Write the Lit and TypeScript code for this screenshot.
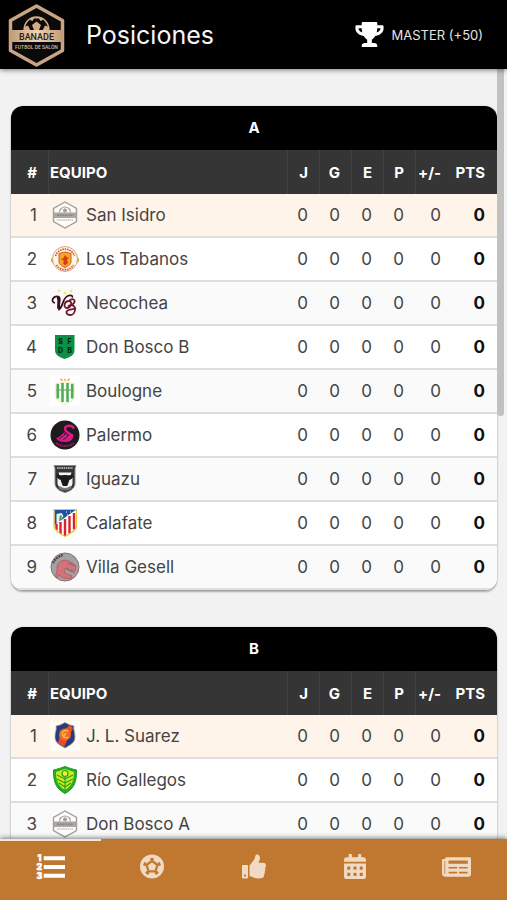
import { LitElement, html, css, svg } from "lit";
import { customElement, property } from "lit/decorators.js";

interface Team {
  name: string;
  crest: string;
}

interface Group {
  name: string;
  teams: Team[];
}

const GROUPS: Group[] = [
  {
    name: "A",
    teams: [
      { name: "San Isidro", crest: "hexagon" },
      { name: "Los Tabanos", crest: "devils" },
      { name: "Necochea", crest: "monogram" },
      { name: "Don Bosco B", crest: "green-shield" },
      { name: "Boulogne", crest: "green-stripes" },
      { name: "Palermo", crest: "swan" },
      { name: "Iguazu", crest: "bull" },
      { name: "Calafate", crest: "red-stripes" },
      { name: "Villa Gesell", crest: "warrior" },
    ],
  },
  {
    name: "B",
    teams: [
      { name: "J. L. Suarez", crest: "blue-shield" },
      { name: "Río Gallegos", crest: "leaf-shield" },
      { name: "Don Bosco A", crest: "hexagon" },
    ],
  },
];

const CRESTS: Record<string, unknown> = {
  hexagon: svg`
    <path d="M15 2 26.500 8.500v13L15 28 3.500 21.500v-13z" fill="#fff" fill-opacity=".6" stroke="#a3a09b" stroke-width="1.400"/>
    <path d="M9.500 12.500a5.500 5.500 0 0 1 11 0" fill="none" stroke="#a3a09b" stroke-width="1.200"/>
    <path d="M15 8.500l2 1.500-1 2h-2l-1-2zM9.500 10l2-2M20.500 10l-2-2" fill="#a3a09b" stroke="#a3a09b" stroke-width=".8"/>
    <rect x="4" y="12.500" width="22" height="5.500" fill="#aaa7a2"/>
    <path d="M7 15.200h16" stroke="#888580" stroke-width="1.600" stroke-dasharray="2 .7"/>
    <path d="M7 20h16" stroke="#aaa7a2" stroke-width="1.200" stroke-dasharray="1.500 .6"/>`,
  devils: svg`
    <circle cx="4.500" cy="16" r="3" fill="#e5a526" stroke="#b98632" stroke-width=".8"/>
    <circle cx="25.500" cy="16" r="3" fill="#e5a526" stroke="#b98632" stroke-width=".8"/>
    <circle cx="15" cy="15" r="12.500" fill="#fff6ea" stroke="#d9a878" stroke-width="1"/>
    <path d="M5.500 12a10 10 0 0 1 19 0" fill="none" stroke="#dc5a3c" stroke-width="1.800" stroke-dasharray="1.600 .8"/>
    <path d="M6.500 21a10 10 0 0 0 17 0" fill="none" stroke="#dc5a3c" stroke-width="1.800" stroke-dasharray="1.600 .8"/>
    <path d="M9 9.500 15 8l6 1.500v8c0 3-2.500 4.500-6 6-3.500-1.500-6-3-6-6z" fill="#f5a822" stroke="#d2562a" stroke-width="1"/>
    <path d="M15 11l2 2.500 2-.5-2 3 1 3-3 2.500-2-2.500 1-2-3-2 2-.5z" fill="#d63a1f"/>`,
  monogram: svg`
    <path d="M8 2l2 2M10 2 8 4M14 4l2 2m0-2-2 2M20 2l2 2m0-2-2 2" stroke="#efe66c" stroke-width="1.600"/>
    <path d="M5 15c-5-1-2-7 3-6.500 4 .5 0 10 1 13C14 18 12 9 19 7.500c3-.5 4 1 3 2" fill="none" stroke="#3c0d1b" stroke-width="1.700"/>
    <path d="M7 9.500c3 .5 1 7 1.500 11" fill="none" stroke="#3c0d1b" stroke-width="2.600"/>
    <path d="M19 13c-5 0-6 7-2 7 4 0 6-7 2-7M19 13c4-4 8 0 4 3-2 1.500-4 1.500-5 2M21 17c6 0 5 10-1 10-4 0-5-4-1-5 3-.8 5-1 7-2" fill="none" stroke="#6b1a2d" stroke-width="1.800"/>`,
  "green-shield": svg`
    <path d="M5 3h19.500v15c0 5-4 7-10 9C9 25 5 23 5 18z" fill="#0a9145"/>
    <g fill="#062414" font-family="Inter, sans-serif" font-size="7" font-weight="800" text-anchor="middle">
      <text x="10.500" y="12">S</text><text x="19.500" y="12">F</text>
      <text x="10.500" y="20.500">D</text><text x="19.500" y="20.500">B</text>
    </g>`,
  "green-stripes": svg`
    <rect width="30" height="30" fill="#fff"/>
    <path d="M11 2.500l1 2.500M19 2.500l-1 2.500M15 3v1.500" stroke="#eab84e" stroke-width="2"/>
    <path d="M6 7.500c3 0 6-1 9-2 3 1 6 2 9 2V21c0 3-5 5-9 8-4-3-9-5-9-8z" fill="#fbfdf7" stroke="#dfd9a5" stroke-width=".7"/>
    <path d="M7.800 8v14.500M12.500 7v19M17.500 7v19M22.200 8v14.500" stroke="#50ad58" stroke-width="2.600"/>
    <path d="M6 14h18" stroke="#6aad62" stroke-width="1.200"/>`,
  swan: svg`
    <circle cx="15" cy="15" r="14.500" fill="#1f1a1e"/>
    <path d="M24 8.500c-2-4-9-3.500-9 .5 0 3.500 7 4 7 8" fill="none" stroke="#d81b86" stroke-width="2.400"/>
    <path d="M23 14c1 5-2 8-8 8-4 0-7-1-9-4 2 0 3-1 4.500-2.500L16 11l-3 5 6-4-3 5 5-3z" fill="#d81b86"/>
    <path d="M9 19l4-3m0 4 4-3" stroke="#1f1a1e" stroke-width=".8"/>
    <path d="M6 23c5 4 13 4 18 0" fill="none" stroke="#a3156a" stroke-width="1.800" stroke-dasharray="1.600 .6"/>`,
  bull: svg`
    <path d="M4 1.500h22l-1 3V19c0 5-4 8-10 9.500C9 27 5 24 5 19V4.500z" fill="#343434" stroke="#8b8b8b" stroke-width="1"/>
    <path d="M7 4h16" stroke="#aaa" stroke-width="1.800" stroke-dasharray="1.500 .7"/>
    <path d="M7.500 8.500h15V19c0 4-4 5.500-7.500 7-3.500-1.500-7.500-3-7.500-7z" fill="#f3f3f3"/>
    <path d="M8 8.500c0 4.500 4 3 7 3s7 1.500 7-3c1.500 4.500 1 6-3 7l-2 6h-4l-2-6c-4-1-4.500-2.500-3-7z" fill="#191919" stroke="#191919"/>
    <path d="M9 23c3 3 9 3 12 0" fill="none" stroke="#777" stroke-width="2.500"/>`,
  "red-stripes": svg`
    <path d="M4 1.500h22.500V18c0 4-5 7-11.500 10.500C8.500 25 4 22 4 18z" fill="#fff"/>
    <path d="M24 5v16.500M19.500 8v17.500M15 11v17M10.500 14v12M6.500 16v6" stroke="#d9202e" stroke-width="2.400"/>
    <path d="M4.500 2h21L4.500 17z" fill="#1b519f"/>
    <path d="M6.500 6l5-1 2 3-4 6-3 1z" fill="#edf3e8"/>
    <path d="M10 7l2 1-1 4-2 1z" fill="#3b9860"/>
    <path d="M16 4h1m3 0h1m-4 3h1" stroke="#fff" stroke-width="1"/>
    <path d="M4 1.500h22.500V18c0 4-5 7-11.500 10.500C8.500 25 4 22 4 18z" fill="none" stroke="#e8c53d" stroke-width="1.200"/>`,
  warrior: svg`
    <circle cx="15" cy="15" r="14" fill="#a4a1a2" stroke="#8a6f72" stroke-width="1"/>
    <path d="M3 11c2-4 6-7 10-8" fill="none" stroke="#4c4446" stroke-width="2.200" stroke-dasharray="2 .7"/>
    <path d="M7 15c0-6 8-9 14-5l5 4-1 5-6-1-2-2-3 1 1 4 7 3-1 3-8-1-4-3-2 3c-3-3 1-6 0-11z" fill="#cf7478" stroke="#ae5157" stroke-width=".7"/>
    <path d="M18 11l8 3M16 17l9 4" stroke="#8c6167" stroke-width="1"/>`,
  "blue-shield": svg`
    <rect width="30" height="30" fill="#fff" fill-opacity=".6"/>
    <path d="M6 5l4-1 5-2.500L20 4l4 1c-1 3 1 6 1 11 0 6-5 8-10 11-5-3-10-5-10-11 0-5 2-8 1-11z" fill="#263b83" stroke="#a4a06b" stroke-width=".8"/>
    <path d="M20 4l3 3-9 19-6-4 2-7 4-6z" fill="#e74e2c"/>
    <circle cx="15" cy="13.500" r="6" fill="#f0682b"/>
    <path d="M18 10c-4-2-7 2-5 5 1 2 4 2 5 1M16 12l-2 3" fill="none" stroke="#f6bf2c" stroke-width="1.500"/>`,
  "leaf-shield": svg`
    <path d="M3.500 5C8 4 11 3 15 1.500 19 3 22 4 26.500 5c0 10-1 18-11.500 23.500C4.500 23 3.500 15 3.500 5z" fill="#23ad24" stroke="#159a22" stroke-width="1"/>
    <path d="M6 7c3-1 6-2 9-3 3 1 6 2 9 3 0 8-2 14-9 18C8 21 6 15 6 7z" fill="#c8ec1c"/>
    <path d="M15 12v14M15 14 7 10m8 8-8-4m8 8-6-4m6-4 8-4m-8 8 8-4m-8 8 6-4" stroke="#2a9c20" stroke-width="1.100"/>
    <circle cx="15" cy="8.500" r="3" fill="#eff034" stroke="#2a9c20" stroke-width="1.200"/>`,
};

const ICONS: Record<string, unknown> = {
  standings: svg`<svg class="icon wide" viewBox="0 0 30 26">
      <g fill="currentColor" stroke="currentColor" stroke-width=".5" font-family="Inter, sans-serif" font-size="9" font-weight="900" text-anchor="middle">
        <text x="3.500" y="7">1</text><text x="3.500" y="16">2</text><text x="3.500" y="25">3</text>
      </g>
      <path fill="currentColor" d="M8 2h22v4H8zM8 11h22v4H8zM8 20h22v4H8z"/>
    </svg>`,
  ball: svg`<svg class="icon" viewBox="0 0 24 24">
      <circle cx="12" cy="12" r="12" fill="currentColor"/>
      <path class="seam" d="M12 5.500v-2M18.200 10l2.200-.8M15.800 17.300l1.700 2M8.200 17.300l-1.700 2M5.800 10l-2.200-.8" fill="none" stroke-width="3.500"/>
      <path class="seam" d="M12 6.500l5.500 4-2.100 6.300H8.600L6.500 10.500z" fill="none" stroke-width="2.200" stroke-linejoin="round"/>
    </svg>`,
  like: svg`<svg class="icon" viewBox="0 0 512 512">
      <path fill="currentColor" d="M104 224H24c-13.255 0-24 10.745-24 24v240c0 13.255 10.745 24 24 24h80c13.255 0 24-10.745 24-24V248c0-13.255-10.745-24-24-24zM64 472c-13.255 0-24-10.745-24-24s10.745-24 24-24 24 10.745 24 24-10.745 24-24 24zM384 81.452c0 42.416-25.970 66.208-33.277 94.548h101.723c33.397 0 59.397 27.746 59.553 58.098.084 17.938-7.546 37.249-19.439 49.197l-.11.11c9.836 23.337 8.237 56.037-9.308 79.469 8.681 25.895-.069 57.704-16.382 74.757 4.298 17.598 2.244 32.575-6.148 44.632C440.202 511.587 389.616 512 346.839 512l-2.845-.001c-48.287-.017-87.806-17.598-119.560-31.725-15.957-7.099-36.821-15.887-52.651-16.178-6.540-.12-11.783-5.457-11.783-11.998v-213.770c0-3.200 1.282-6.271 3.558-8.521 39.614-39.144 56.648-80.587 89.117-113.111 14.804-14.832 20.188-37.236 25.393-58.902C282.515 39.293 291.817 0 312 0c24 0 72 8 72 81.452z"/>
    </svg>`,
  calendar: svg`<svg class="icon" viewBox="0 0 448 512">
      <path fill="currentColor" d="M0 464c0 26.500 21.500 48 48 48h352c26.500 0 48-21.500 48-48V192H0v272zm320-196c0-6.600 5.400-12 12-12h40c6.600 0 12 5.400 12 12v40c0 6.600-5.400 12-12 12h-40c-6.600 0-12-5.400-12-12v-40zm0 128c0-6.600 5.400-12 12-12h40c6.600 0 12 5.400 12 12v40c0 6.600-5.400 12-12 12h-40c-6.600 0-12-5.400-12-12v-40zM192 268c0-6.600 5.400-12 12-12h40c6.600 0 12 5.400 12 12v40c0 6.600-5.400 12-12 12h-40c-6.600 0-12-5.400-12-12v-40zm0 128c0-6.600 5.400-12 12-12h40c6.600 0 12 5.400 12 12v40c0 6.600-5.400 12-12 12h-40c-6.600 0-12-5.400-12-12v-40zM64 268c0-6.600 5.400-12 12-12h40c6.600 0 12 5.400 12 12v40c0 6.600-5.400 12-12 12H76c-6.600 0-12-5.400-12-12v-40zm0 128c0-6.600 5.400-12 12-12h40c6.600 0 12 5.400 12 12v40c0 6.600-5.400 12-12 12H76c-6.600 0-12-5.400-12-12v-40zM400 64h-48V16c0-8.800-7.200-16-16-16h-32c-8.800 0-16 7.200-16 16v48H160V16c0-8.800-7.200-16-16-16h-32c-8.800 0-16 7.200-16 16v48H48C21.500 64 0 85.500 0 112v48h448v-48c0-26.500-21.500-48-48-48z"/>
    </svg>`,
  news: svg`<svg class="icon wide" viewBox="0 0 576 512">
      <path fill="currentColor" d="M552 64H88c-13.255 0-24 10.745-24 24v8H24c-13.255 0-24 10.745-24 24v272c0 30.928 25.072 56 56 56h472c26.510 0 48-21.490 48-48V88c0-13.255-10.745-24-24-24zM56 400a8 8 0 0 1-8-8V144h16v248a8 8 0 0 1-8 8zm236-16H140c-6.627 0-12-5.373-12-12v-8c0-6.627 5.373-12 12-12h152c6.627 0 12 5.373 12 12v8c0 6.627-5.373 12-12 12zm208 0H348c-6.627 0-12-5.373-12-12v-8c0-6.627 5.373-12 12-12h152c6.627 0 12 5.373 12 12v8c0 6.627-5.373 12-12 12zm-208-96H140c-6.627 0-12-5.373-12-12v-8c0-6.627 5.373-12 12-12h152c6.627 0 12 5.373 12 12v8c0 6.627-5.373 12-12 12zm208 0H348c-6.627 0-12-5.373-12-12v-8c0-6.627 5.373-12 12-12h152c6.627 0 12 5.373 12 12v8c0 6.627-5.373 12-12 12zm0-96H140c-6.627 0-12-5.373-12-12v-40c0-6.627 5.373-12 12-12h360c6.627 0 12 5.373 12 12v40c0 6.627-5.373 12-12 12z"/>
    </svg>`,
};

const TABS = ["standings", "ball", "like", "calendar", "news"];
const STATS = ["J", "G", "E", "P"];

@customElement("group-table")
class GroupTable extends LitElement {
  @property({ attribute: false }) group!: Group;

  static styles = css`
    :host {
      display: block;
      border-radius: 12px;
      overflow: hidden;
      background: #fff;
      box-shadow: 0 2px 2px rgba(0, 0, 0, 0.3), 0 0 2px rgba(0, 0, 0, 0.15);
    }
    table {
      width: 100%;
      table-layout: fixed;
      border-collapse: separate;
      border-spacing: 0;
    }
    caption {
      height: 44px;
      line-height: 44px;
      background: #000;
      color: #fff;
      font-size: 15px;
      font-weight: 700;
    }
    th,
    td {
      box-sizing: border-box;
      height: 44px;
      padding: 0 12px 0 0;
      text-align: right;
      white-space: nowrap;
    }
    thead th {
      background: #353535;
      color: #fff;
      font-size: 15px;
      font-weight: 700;
      border-right: 1px solid #424242;
      padding-right: 11px;
    }
    thead .goals,
    thead .points {
      border-right: 0;
      padding-right: 12px;
    }
    .rank {
      width: 38px;
    }
    .stat {
      width: 32px;
    }
    .goals {
      width: 37px;
    }
    .points {
      width: 44px;
    }
    thead .team,
    .team {
      text-align: left;
      padding: 0 0 0 1px;
    }
    td {
      border-bottom: 2px solid #dedede;
      color: #444;
      font-size: 17px;
    }
    tbody tr:nth-child(odd) {
      background: #fafafa;
    }
    tbody tr:first-child {
      background: #fff4e9;
    }
    td.points {
      color: #111;
      font-weight: 700;
    }
    .identity {
      display: flex;
      align-items: center;
      gap: 6px;
    }
    .crest {
      flex: none;
      width: 30px;
      height: 30px;
    }
  `;

  render() {
    return html`
      <table>
        <caption>${this.group.name}</caption>
        <thead>
          <tr>
            <th class="rank" scope="col">#</th>
            <th class="team" scope="col">EQUIPO</th>
            ${STATS.map((s) => html`<th class="stat" scope="col">${s}</th>`)}
            <th class="goals" scope="col">+/-</th>
            <th class="points" scope="col">PTS</th>
          </tr>
        </thead>
        <tbody>
          ${this.group.teams.map(
            (team, i) => html`<tr>
              <td class="rank">${i + 1}</td>
              <td class="team">
                <div class="identity">
                  <svg class="crest" viewBox="0 0 30 30" aria-hidden="true">${CRESTS[team.crest]}</svg>
                  <span>${team.name}</span>
                </div>
              </td>
              ${STATS.map(() => html`<td class="stat">0</td>`)}
              <td class="goals">0</td>
              <td class="points">0</td>
            </tr>`
          )}
        </tbody>
      </table>
    `;
  }
}

@customElement("app-root")
class AppRoot extends LitElement {
  static styles = css`
    :host {
      display: flex;
      flex-direction: column;
      height: 100vh;
      background: #f2f2f2;
      color: #444;
      font-family: Inter, "Open Sans", sans-serif;
    }
    header {
      position: relative;
      z-index: 1;
      flex: none;
      display: flex;
      align-items: center;
      box-sizing: border-box;
      height: 69px;
      padding: 0 24px 0 8px;
      background: #000;
      color: #f5f5f5;
      box-shadow: 0 1px 5px rgba(0, 0, 0, 0.5);
    }
    .brand {
      flex: none;
      width: 57px;
      height: 64px;
    }
    h1 {
      flex: 1;
      margin: 0 0 0 21px;
      font-size: 25px;
      font-weight: 400;
    }
    .league {
      display: flex;
      align-items: center;
      gap: 8px;
      padding: 0;
      border: 0;
      background: none;
      color: #e4e4e4;
      font: inherit;
      font-size: 13px;
    }
    .trophy {
      width: 29px;
      height: 25px;
      color: #fff;
    }
    .body {
      position: relative;
      flex: 1;
      min-height: 0;
    }
    main {
      box-sizing: border-box;
      height: 100%;
      overflow-y: auto;
      scrollbar-width: none;
      display: flex;
      flex-direction: column;
      gap: 37px;
      padding: 37px 10px 37px 11px;
    }
    group-table {
      flex: none;
    }
    .thumb {
      position: absolute;
      top: 0;
      right: 3px;
      width: 7px;
      height: 45%;
      border-radius: 0 0 4px 4px;
      background: #c1c1c1;
    }
    nav {
      position: relative;
      z-index: 1;
      flex: none;
      display: flex;
      height: 61px;
      background: #c07830;
      box-shadow: 0 -1px 5px rgba(0, 0, 0, 0.5);
    }
    .tab {
      flex: 1;
      display: flex;
      align-items: center;
      justify-content: center;
      box-sizing: border-box;
      padding: 0 0 8px;
      border: 0;
      border-top: 2px solid transparent;
      background: none;
      color: #f0dac3;
    }
    .tab.active {
      border-top-color: #f5e4d2;
      color: #fff;
    }
    .icon {
      width: 24px;
      height: 25px;
    }
    .icon.wide {
      width: 29px;
      height: 26px;
    }
    .seam {
      stroke: #c07830;
    }
  `;

  render() {
    return html`
      <header>
        <svg class="brand" viewBox="0 0 57 64" role="img" aria-label="Banade">
          <defs>
            <linearGradient id="gold" x1="0" x2="1">
              <stop offset="0" stop-color="#c29a77" />
              <stop offset=".5" stop-color="#efd3b0" />
              <stop offset="1" stop-color="#c29a77" />
            </linearGradient>
          </defs>
          <path d="M28.500 3 54.500 17.500v30L28.500 62 2.500 47.500v-30z" fill="#0b0a0a" stroke="#caa585" stroke-width="3.500" stroke-linejoin="round" />
          <path d="M16 28c0-8 5-14 12.500-14S41 20 41 28" fill="#0b0a0a" stroke="#d3ab87" stroke-width="1.500" />
          <path d="M28.500 18.500l4.500 3.500-2 5h-5l-2-5zM21 16.500l3.500 1.500 1.500-2.500h5l1.500 2.500 3.500-1.500-4-2.500h-7zM16 24l4-1.500 2.500 5H16zM41 24l-4-1.500-2.500 5H41z" fill="#d3ab87" />
          <rect x="2" y="27" width="53" height="12" fill="url(#gold)" />
          <text x="28.500" y="36.500" text-anchor="middle" font-family="Roboto, sans-serif" font-size="9" font-weight="500" fill="#241d19">BANADE</text>
          <text x="28.500" y="46" text-anchor="middle" font-family="Roboto, sans-serif" font-size="5" font-weight="500" fill="#dfbd9c">FUTBOL DE SALÓN</text>
        </svg>
        <h1>Posiciones</h1>
        <button class="league">
          <svg class="trophy" viewBox="0 0 576 512" aria-hidden="true">
            <path fill="currentColor" d="M552 64H448V24c0-13.300-10.700-24-24-24H152c-13.300 0-24 10.700-24 24v40H24C10.700 64 0 74.700 0 88v56c0 35.700 22.500 72.400 61.900 100.700 31.500 22.700 69.800 37.100 110 41.700C203.300 338.500 240 360 240 360v72h-48c-35.300 0-64 20.700-64 56v12c0 6.600 5.400 12 12 12h296c6.600 0 12-5.400 12-12v-12c0-35.300-28.700-56-64-56h-48v-72s36.700-21.500 68.100-73.600c40.300-4.600 78.600-19 110-41.700 39.300-28.300 61.900-65 61.900-100.700V88c0-13.300-10.700-24-24-24zM99.300 192.800C74.900 175.200 64 155.600 64 144v-16h64.200c1 32.600 5.800 61.200 12.800 86.200-15.100-5.200-29.200-12.400-41.700-21.400zM512 144c0 16.100-17.700 36.100-35.300 48.800-12.500 9-26.700 16.200-41.800 21.400 7-25 11.800-53.600 12.800-86.200H512v16z" />
          </svg>
          <span>MASTER (+50)</span>
        </button>
      </header>
      <div class="body">
        <main>
          ${GROUPS.map((g) => html`<group-table .group=${g}></group-table>`)}
        </main>
        <div class="thumb"></div>
      </div>
      <nav>
        ${TABS.map(
          (tab, i) => html`<button class="tab ${i === 0 ? "active" : ""}" aria-label=${tab}>${ICONS[tab]}</button>`
        )}
      </nav>
    `;
  }
}
